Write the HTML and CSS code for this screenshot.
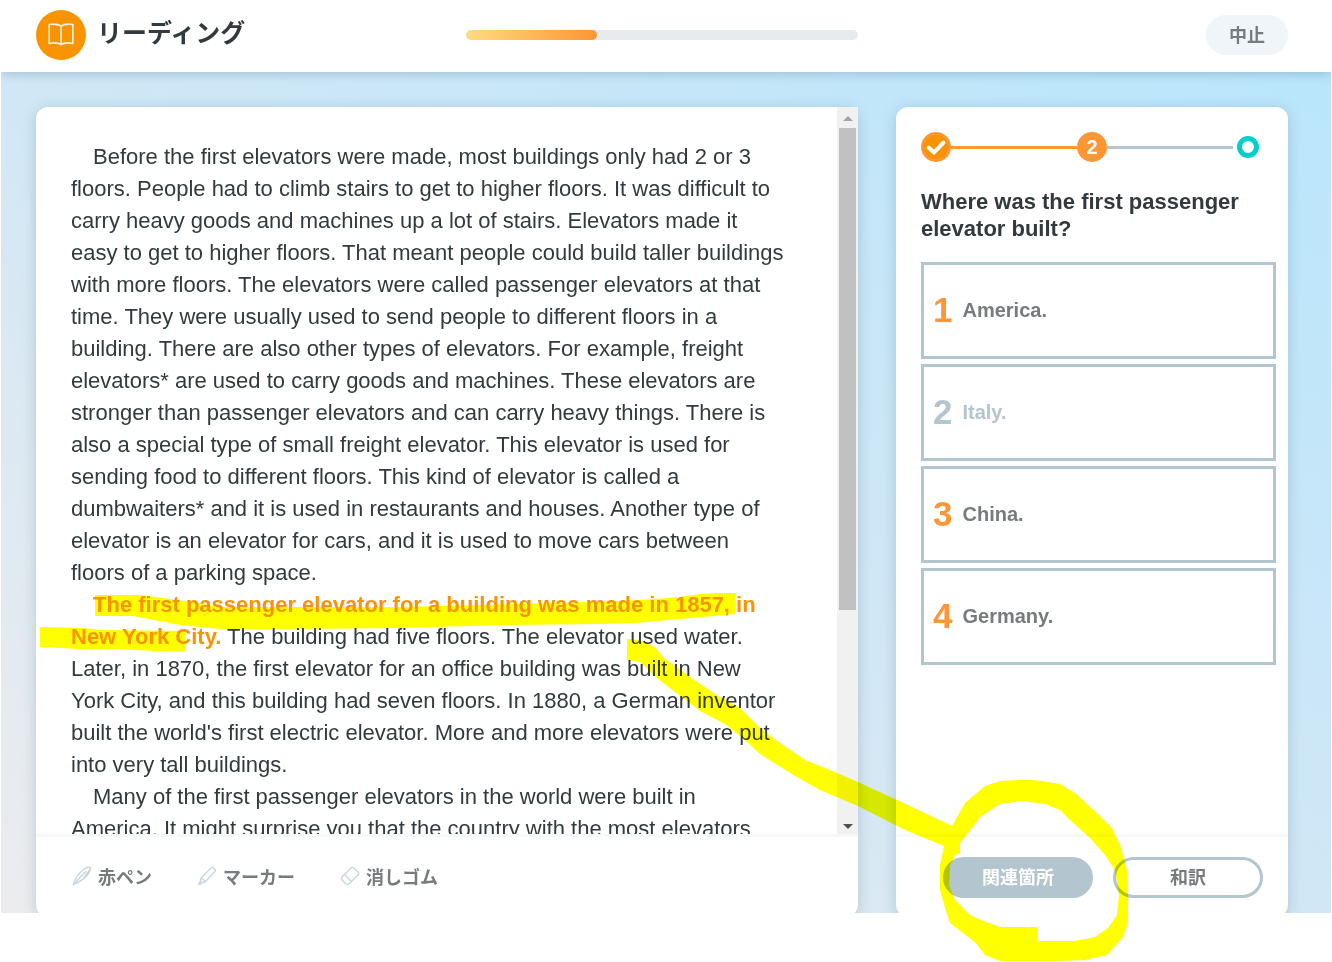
FILE: index.html
```html
<!DOCTYPE html>
<html lang="ja">
<head>
  <meta charset="UTF-8">
  <meta name="viewport" content="width=device-width, initial-scale=1">
  <title>リーディング</title>
  <link rel="stylesheet" href="styles.css">
</head>
<body>

<div class="app">
  <header class="header">
    <div class="brand">
      <svg class="brand-icon" viewBox="0 0 50 50" aria-hidden="true">
        <circle cx="25" cy="25" r="25" fill="#f79400"/>
        <g fill="none" stroke="#fff2dd" stroke-width="1.6" stroke-linejoin="round">
          <path d="M25 16C22 14 18 13.700 13.200 14.500V33.500C18 32.500 22 32.600 25 34.700C28 32.600 32 32.500 36.800 33.500V14.500C32 13.700 28 14 25 16Z"/>
          <path d="M25 16V34.500"/>
        </g>
      </svg>
      <h1 class="title">リーディング</h1>
    </div>
    <progress class="progress" value="1" max="3" aria-label="進捗"></progress>
    <div class="header-end">
      <button class="stop" type="button">中止</button>
    </div>
  </header>

  <main class="main">
    <section class="card">
      <div class="reader">
        <article class="passage">
          <p>Before the first elevators were made, most buildings only had 2 or 3 floors. People had to climb stairs to get to higher floors. It was difficult to carry heavy goods and machines up a lot of stairs. Elevators made it easy to get to higher floors. That meant people could build taller buildings with more floors. The elevators were called passenger elevators at that time. They were usually used to send people to different floors in a building. There are also other types of elevators. For example, freight elevators* are used to carry goods and machines. These elevators are stronger than passenger elevators and can carry heavy things. There is also a special type of small freight elevator. This elevator is used for sending food to different floors. This kind of elevator is called a dumbwaiters* and it is used in restaurants and houses. Another type of elevator is an elevator for cars, and it is used to move cars between floors of a parking space.</p>
          <p><strong class="related">The first passenger elevator for a building was made in 1857, in New York City.</strong> The building had five floors. The elevator used water. Later, in 1870, the first elevator for an office building was built in New York City, and this building had seven floors. In 1880, a German inventor built the world's first electric elevator. More and more elevators were put into very tall buildings.</p>
          <p>Many of the first passenger elevators in the world were built in America. It might surprise you that the country with the most elevators</p>
        </article>
        <div class="scrollbar" aria-hidden="true">
          <span class="arrow arrow-up"></span>
          <div class="track"><div class="thumb"></div></div>
          <span class="arrow arrow-down"></span>
        </div>
      </div>
      <div class="card-footer tools">
        <button class="tool" type="button">
          <svg viewBox="0 0 20 20" aria-hidden="true"><path d="M1.500 18.500C2.500 14 6 8 11.500 3.500C14 1.500 17 1 18.500 1.500C18.500 4 17 7 14.500 10C11 14 6 16.500 1.500 18.500Z"/><path d="M1.500 18.500L14 5"/><path class="fill" d="M18.500 1.500C19 5 17 9 12.500 13L11.500 10.500Z"/></svg>
          赤ペン
        </button>
        <button class="tool" type="button">
          <svg viewBox="0 0 20 20" aria-hidden="true"><path d="M4 12L14.500 1.500Q15.500 1 16.500 2L18 3.500Q19 4.500 18 5.500L8 16L4.500 16.500L3.500 15.500Z"/><path d="M4.500 12L8.500 15.500M3.500 15L1.500 18.500L5 17"/></svg>
          マーカー
        </button>
        <button class="tool" type="button">
          <svg viewBox="0 0 20 20" aria-hidden="true"><path d="M2 11L11.500 1.500Q12.500 1 13.500 2L18.500 6.500Q19 7.500 18.500 8.500L9 18Q7.500 19 6 18L2 14Q1 12.500 2 11Z"/><path d="M4.500 8.500L11.500 15.500"/></svg>
          消しゴム
        </button>
      </div>
    </section>

    <section class="card">
      <div class="question">
        <ol class="steps">
          <li class="step">
            <svg viewBox="0 0 30 30" aria-hidden="true"><circle cx="15" cy="15" r="13.500" fill="#f79400" stroke="#fd9634" stroke-width="3"/><path d="M7.500 15.500L13 20.500L22.500 10.500" fill="none" stroke="#fff" stroke-width="4" stroke-linecap="round"/></svg>
          </li>
          <li class="line done"></li>
          <li class="step current">2</li>
          <li class="line"></li>
          <li class="step">
            <svg viewBox="0 0 30 30" aria-hidden="true"><circle cx="15" cy="15" r="8.500" fill="none" stroke="#00cfce" stroke-width="5"/></svg>
          </li>
        </ol>
        <h2 class="prompt">Where was the first passenger elevator built?</h2>
        <div class="answers">
          <button class="answer" type="button"><span class="number">1</span>America.</button>
          <button class="answer" type="button" disabled><span class="number">2</span>Italy.</button>
          <button class="answer" type="button"><span class="number">3</span>China.</button>
          <button class="answer" type="button"><span class="number">4</span>Germany.</button>
        </div>
      </div>
      <div class="card-footer actions">
        <button class="pill pill-on" type="button">関連箇所</button>
        <button class="pill" type="button">和訳</button>
      </div>
    </section>
  </main>
</div>

<!-- hand-drawn marker strokes -->
<svg class="marks" viewBox="0 0 1332 962" aria-hidden="true">
  <path d="M95 595H140L185 601L220 607H400L480 605L560 603L640 600L680 597L700 594L718 593H735V614L680 619L635 623L600 624L500 625L400 628L300 629H220L180 625L133 616H95Z"/>
  <path d="M40 627L85 628L100 630L185 631V651H155L115 649L80 649L40 647Z"/>
  <path d="M627 639L640 640L655 647L664 658L690 677L715 694L740 708L760 728L780 743L805 760L830 770L858 782L910 806L952 826L965 803L985 786L1000 781L1020 780H1034L1060 784L1075 793L1100 816L1112 828L1120 845L1127 870L1128 895V922L1123 937L1107 955L1085 960L1055 961H1000L985 955L976 943L950 923L945 908L940 890V865L944 846L905 830L858 806L820 790L795 776L760 754L745 740L725 724L700 711L675 692L657 678L640 662L627 660Z M960 843V853L955 855L950 866L949 885L955 900L970 915L981 920L1000 927H1037V941H1075L1095 937L1108 928L1117 915L1119 895L1115 870L1105 855L1090 838L1070 820L1060 810L1045 804L1022 801L1000 804L980 817L972 828Z"/>
</svg>

</body>
</html>
```
FILE: styles.css
```css
* {
  box-sizing: border-box;
}

body {
  margin: 0;
  background: #fff;
  color: #333a3d;
  font-family: "Liberation Sans", "Noto Sans CJK JP", sans-serif;
  overflow: hidden;
}

button {
  padding: 0 0 3px;
  border: 0;
  background: none;
  color: #777b7e;
  font-family: inherit;
  font-size: 18px;
  font-weight: bold;
}

.app {
  display: flex;
  flex-direction: column;
  height: calc(100vh - 49px);
  margin: 0 1px;
  overflow: hidden;
}

.header {
  display: grid;
  grid-template-columns: 1fr 392px 1fr;
  align-items: center;
  padding: 10px 43px 12px 35px;
  background: #fff;
  box-shadow: 0 2px 10px rgba(60, 100, 130, 0.3);
  z-index: 1;
}

.brand {
  display: flex;
  align-items: center;
  gap: 11px;
}

.brand-icon {
  width: 50px;
  height: 50px;
}

.title {
  margin: 0;
  font-size: 25px;
  line-height: 28px;
  padding-bottom: 4px;
}

.progress {
  appearance: none;
  width: 100%;
  height: 10px;
  border: 0;
  border-radius: 5px;
  background: #e7ebee;
  overflow: hidden;
}

.progress::-webkit-progress-bar {
  background: #e7ebee;
}

.progress::-webkit-progress-value {
  border-radius: 5px;
  background: linear-gradient(to right, #ffdb80, #fd9634);
}

.header-end {
  display: flex;
  justify-content: flex-end;
}

.stop {
  width: 82px;
  height: 40px;
  border-radius: 20px;
  background: #f0f5f9;
}

.main {
  flex: 1;
  min-height: 0;
  display: grid;
  grid-template-columns: minmax(0, 1fr) 392px;
  gap: 38px;
  padding: 35px 43px 0 35px;
  background: linear-gradient(to top right, #ececee, #d1e7f5 50%, #b9e6fc);
  overflow: hidden;
}

.card {
  display: flex;
  flex-direction: column;
  min-height: 0;
  margin-bottom: -4px;
  border-radius: 12px;
  background: #fff;
  box-shadow: 0 2px 14px rgba(60, 100, 130, 0.25);
}

.reader {
  flex: 1;
  min-height: 0;
  display: flex;
}

.passage {
  flex: 1;
  padding: 34px 51px 0 35px;
  overflow: hidden;
  font-size: 22px;
  line-height: 32px;
}

.passage p {
  margin: 0;
  text-indent: 1em;
}

.related {
  color: #f79400;
}

.scrollbar {
  display: flex;
  flex-direction: column;
  width: 21px;
  background: #f1f1f1;
}

.arrow {
  align-self: center;
  border: 5px solid transparent;
}

.arrow-up {
  margin: 4px 0 7px;
  border-bottom-color: #a3a3a3;
}

.arrow-down {
  margin: 7px 0 0;
  border-top-color: #505050;
}

.track {
  flex: 1;
  padding: 0 2px;
}

.thumb {
  height: 70%;
  background: #c1c1c1;
}

.card-footer {
  display: flex;
  align-items: center;
  padding: 20px 25px 19px;
  border-top: 3px solid #f7f8f9;
}

.tools {
  gap: 45px;
  padding-left: 36px;
}

.tool {
  display: flex;
  align-items: center;
  gap: 6px;
  height: 41px;
}

.tool svg {
  width: 20px;
  height: 20px;
  fill: none;
  stroke: #cbd7dd;
  stroke-width: 1.5;
  stroke-linejoin: round;
}

.tool .fill {
  fill: #cbd7dd;
  stroke: none;
}

.question {
  flex: 1;
  padding: 25px 12px 25px 25px;
}

.steps {
  display: flex;
  align-items: center;
  margin: 0 13px 26px 0;
  padding: 0;
  list-style: none;
}

.step {
  width: 30px;
  height: 30px;
}

.current {
  border-radius: 50%;
  background: #fd9634;
  color: #fff;
  font-size: 20px;
  font-weight: bold;
  line-height: 30px;
  text-align: center;
}

.line {
  flex: 1;
  height: 3px;
  background: #b3c5cf;
}

.done {
  background: #fd9634;
}

.prompt {
  margin: 0 0 20px;
  font-size: 22px;
  line-height: 27px;
}

.answers {
  display: grid;
  gap: 5px;
}

.answer {
  display: flex;
  align-items: center;
  gap: 10px;
  height: 97px;
  padding: 0 9px 1px;
  border: 3px solid #b3c5cf;
  font-size: 20px;
}

.number {
  color: #fd9634;
  font-size: 35px;
}

.answer:disabled,
.answer:disabled .number {
  color: #b3c5cf;
}

.actions {
  justify-content: flex-end;
  gap: 20px;
}

.pill {
  width: 150px;
  height: 41px;
  border: 3px solid #b3c5cf;
  border-radius: 21px;
}

.pill-on {
  background: #b3c5cf;
  color: #fff;
}

/* marker ink lies over everything, text shows through */
.marks {
  position: absolute;
  top: 0;
  left: 0;
  width: 1332px;
  height: 962px;
  fill: #ff0;
  fill-rule: evenodd;
  mix-blend-mode: multiply;
  pointer-events: none;
  z-index: 2;
}
```
